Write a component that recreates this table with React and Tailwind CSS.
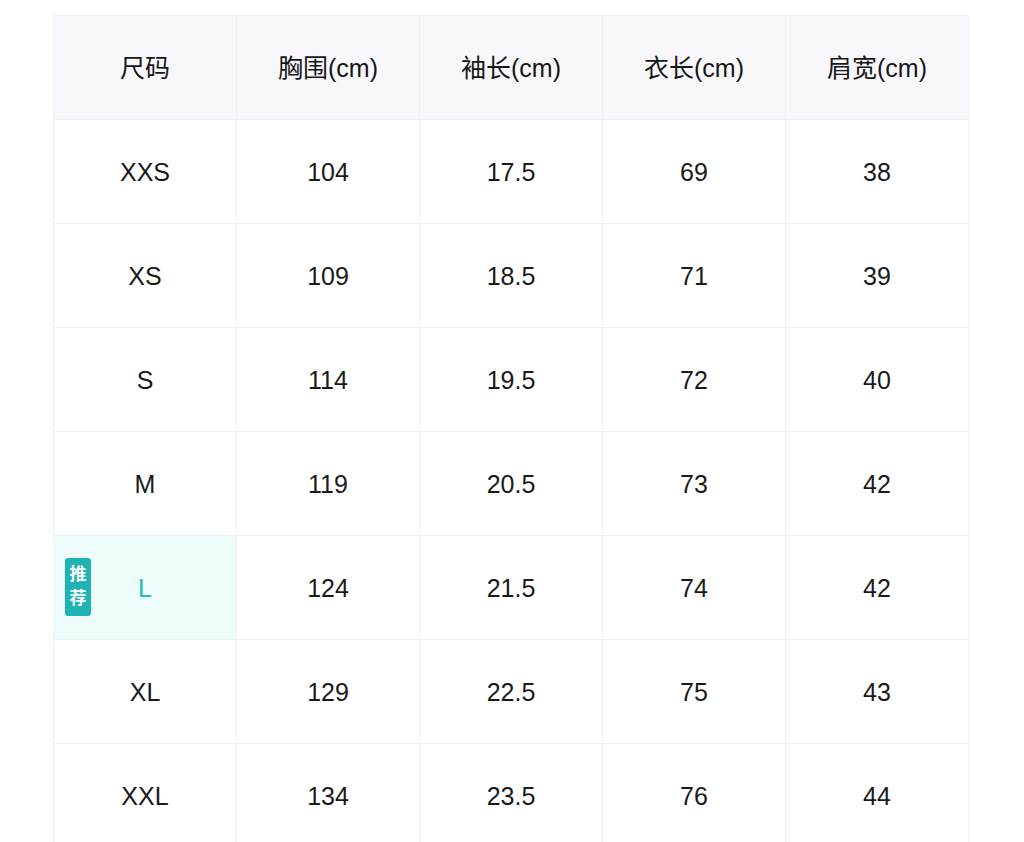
const headers = ['尺码', '胸围(cm)', '袖长(cm)', '衣长(cm)', '肩宽(cm)'];

const rows = [
  ['XXS', '104', '17.5', '69', '38'],
  ['XS', '109', '18.5', '71', '39'],
  ['S', '114', '19.5', '72', '40'],
  ['M', '119', '20.5', '73', '42'],
  ['L', '124', '21.5', '74', '42', true],
  ['XL', '129', '22.5', '75', '43'],
  ['XXL', '134', '23.5', '76', '44'],
];

export default function App() {
  return (
    <div
      className="w-[1024px] h-[842px] overflow-hidden bg-white pt-[15px] pl-[53px]"
      style={{ fontFamily: '"Liberation Sans", "Noto Sans CJK SC", sans-serif' }}
    >
      <div className="w-[916px] border-l border-t border-[#eef0f4]">
        {/* header */}
        <div className="grid grid-cols-5 bg-[#f8f8fc]">
          {headers.map((h) => (
            <div
              key={h}
              className="h-[104px] pt-[2px] flex items-center justify-center border-r border-b border-[#eef0f4] text-[25px] text-[#161616]"
            >
              {h}
            </div>
          ))}
        </div>

        {rows.map((r) => {
          const rec = r[5] === true;
          return (
            <div key={r[0]} className="grid grid-cols-5">
              <div
                className={`relative h-[104px] pt-[2px] flex items-center justify-center border-r border-b border-[#eef0f4] text-[25px] ${
                  rec ? 'bg-[#effcfc] text-[#2cb8b8]' : 'text-[#1a1a1a]'
                }`}
              >
                {rec && (
                  <div className="absolute left-[11px] top-[22px] w-[26px] h-[58px] rounded-[3px] bg-[#1fb3b3] flex flex-col items-center justify-center text-white text-[17px] font-bold leading-[24px]">
                    <span>推</span>
                    <span>荐</span>
                  </div>
                )}
                {r[0]}
              </div>
              {r.slice(1, 5).map((v, i) => (
                <div
                  key={i}
                  className="h-[104px] pt-[2px] flex items-center justify-center border-r border-b border-[#eef0f4] text-[25px] text-[#1a1a1a]"
                >
                  {v}
                </div>
              ))}
            </div>
          );
        })}
      </div>
    </div>
  );
}
